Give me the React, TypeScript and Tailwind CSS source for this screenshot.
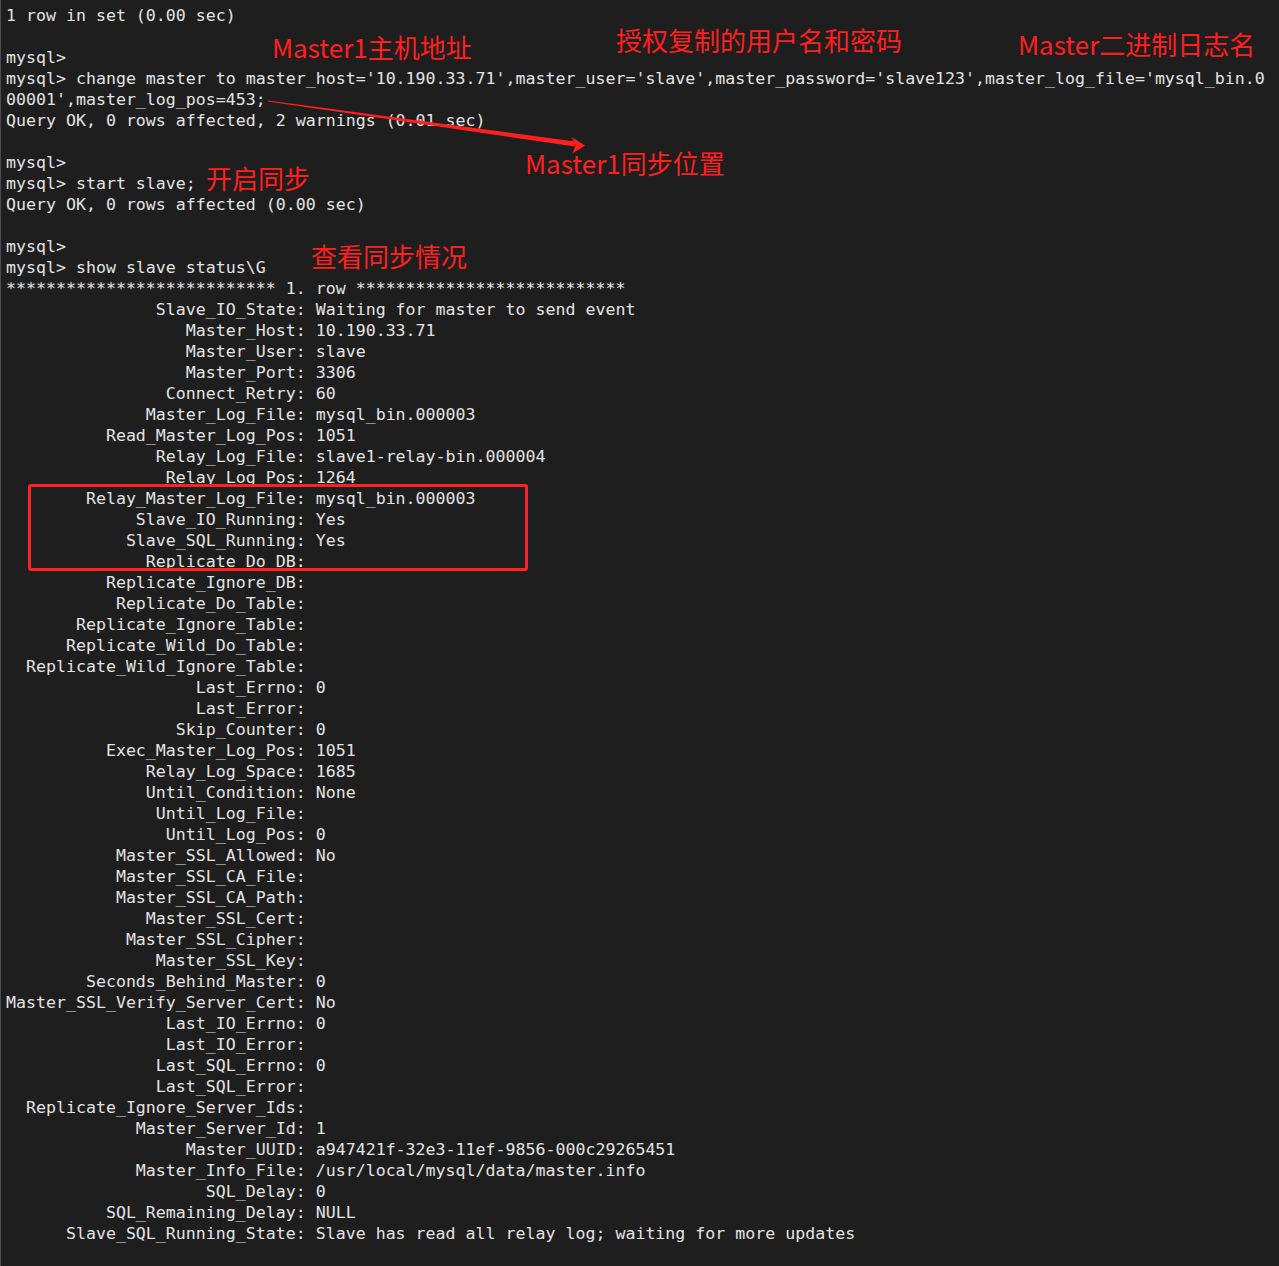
import React from "react";

const fields: [string, string][] = [
  ["Slave_IO_State", "Waiting for master to send event"],
  ["Master_Host", "10.190.33.71"],
  ["Master_User", "slave"],
  ["Master_Port", "3306"],
  ["Connect_Retry", "60"],
  ["Master_Log_File", "mysql_bin.000003"],
  ["Read_Master_Log_Pos", "1051"],
  ["Relay_Log_File", "slave1-relay-bin.000004"],
  ["Relay_Log_Pos", "1264"],
  ["Relay_Master_Log_File", "mysql_bin.000003"],
  ["Slave_IO_Running", "Yes"],
  ["Slave_SQL_Running", "Yes"],
  ["Replicate_Do_DB", ""],
  ["Replicate_Ignore_DB", ""],
  ["Replicate_Do_Table", ""],
  ["Replicate_Ignore_Table", ""],
  ["Replicate_Wild_Do_Table", ""],
  ["Replicate_Wild_Ignore_Table", ""],
  ["Last_Errno", "0"],
  ["Last_Error", ""],
  ["Skip_Counter", "0"],
  ["Exec_Master_Log_Pos", "1051"],
  ["Relay_Log_Space", "1685"],
  ["Until_Condition", "None"],
  ["Until_Log_File", ""],
  ["Until_Log_Pos", "0"],
  ["Master_SSL_Allowed", "No"],
  ["Master_SSL_CA_File", ""],
  ["Master_SSL_CA_Path", ""],
  ["Master_SSL_Cert", ""],
  ["Master_SSL_Cipher", ""],
  ["Master_SSL_Key", ""],
  ["Seconds_Behind_Master", "0"],
  ["Master_SSL_Verify_Server_Cert", "No"],
  ["Last_IO_Errno", "0"],
  ["Last_IO_Error", ""],
  ["Last_SQL_Errno", "0"],
  ["Last_SQL_Error", ""],
  ["Replicate_Ignore_Server_Ids", ""],
  ["Master_Server_Id", "1"],
  ["Master_UUID", "a947421f-32e3-11ef-9856-000c29265451"],
  ["Master_Info_File", "/usr/local/mysql/data/master.info"],
  ["SQL_Delay", "0"],
  ["SQL_Remaining_Delay", "NULL"],
  ["Slave_SQL_Running_State", "Slave has read all relay log; waiting for more updates"],
];

const stars = "***************************";

const lines: string[] = [
  "1 row in set (0.00 sec)",
  "",
  "mysql>",
  "mysql> change master to master_host='10.190.33.71',master_user='slave',master_password='slave123',master_log_file='mysql_bin.0",
  "00001',master_log_pos=453;",
  "Query OK, 0 rows affected, 2 warnings (0.01 sec)",
  "",
  "mysql>",
  "mysql> start slave;",
  "Query OK, 0 rows affected (0.00 sec)",
  "",
  "mysql>",
  "mysql> show slave status\\G",
  `${stars} 1. row ${stars}`,
  ...fields.map(([k, v]) => `${k.padStart(29, " ")}: ${v}`),
];

function Note({ className, children }: { className: string; children: React.ReactNode }) {
  return (
    <div
      className={`absolute whitespace-nowrap text-[26px] leading-none text-[#ff1f1f] ${className}`}
      style={{ fontFamily: '"Noto Sans CJK SC", "Noto Sans", sans-serif' }}
    >
      {children}
    </div>
  );
}

export default function App() {
  return (
    <div className="relative w-[1279px] h-[1266px] overflow-hidden bg-[#1e1e1e] border-l border-[#4d4d4d]">
      <div
        className="flex flex-col pt-[4.5px] pl-[5px] text-[16.6px] text-[#e3e3e3]"
        style={{ fontFamily: '"DejaVu Sans Mono", "Liberation Mono", monospace' }}
      >
        {lines.map((l, i) => (
          <div key={i} className="h-[21px] leading-[21px] whitespace-pre">
            {l || "\u00a0"}
          </div>
        ))}
      </div>

      {/* red annotations drawn over the terminal */}
      <Note className="left-[271px] top-[34px]">Master1主机地址</Note>
      <Note className="left-[615px] top-[27px]">授权复制的用户名和密码</Note>
      <Note className="left-[1017px] top-[31px]">Master二进制日志名</Note>
      <Note className="left-[524px] top-[150px]">Master1同步位置</Note>
      <Note className="left-[205px] top-[165px]">开启同步</Note>
      <Note className="left-[310px] top-[243px]">查看同步情况</Note>

      <svg className="absolute left-0 top-0 pointer-events-none" width="1279" height="1266">
        <polygon
          points="267.1,100.4 574.3,141.6 573.7,146.4 266.9,101.6"
          fill="#ff1f1f"
        />
        <polygon points="570.5,137 584,145.5 571.5,153.5 574.5,145.3" fill="#ff1f1f" />
      </svg>

      <div className="absolute left-[27px] top-[484px] w-[500px] h-[87px] border-[3px] border-[#ff2020] rounded-[3px]" />
    </div>
  );
}
